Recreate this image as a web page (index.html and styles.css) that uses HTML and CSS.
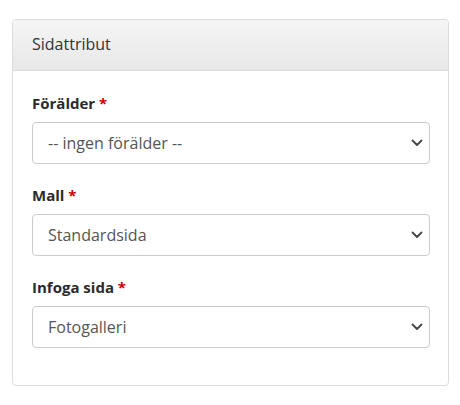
FILE: index.html
```html
<!DOCTYPE html>
<html lang="sv">
<head>
<meta charset="utf-8">
<title>Sidattribut</title>
<link rel="stylesheet" href="styles.css">
</head>
<body>
<div class="card">
  <div class="card-header">Sidattribut</div>
  <div class="card-body">
    <div class="form-group">
      <label class="label">Förälder <span class="req">*</span></label>
      <div class="select-wrap">
        <select class="select"><option>-- ingen förälder --</option></select>
        <svg class="chevron" width="12" height="8" viewBox="0 0 12 8"><path d="M1.5 1.5 L6 6 L10.5 1.5" fill="none" stroke="#444" stroke-width="1.8" stroke-linecap="round" stroke-linejoin="round"/></svg>
      </div>
    </div>
    <div class="form-group">
      <label class="label">Mall <span class="req">*</span></label>
      <div class="select-wrap">
        <select class="select"><option>Standardsida</option></select>
        <svg class="chevron" width="12" height="8" viewBox="0 0 12 8"><path d="M1.5 1.5 L6 6 L10.5 1.5" fill="none" stroke="#444" stroke-width="1.8" stroke-linecap="round" stroke-linejoin="round"/></svg>
      </div>
    </div>
    <div class="form-group">
      <label class="label">Infoga sida <span class="req">*</span></label>
      <div class="select-wrap">
        <select class="select"><option>Fotogalleri</option></select>
        <svg class="chevron" width="12" height="8" viewBox="0 0 12 8"><path d="M1.5 1.5 L6 6 L10.5 1.5" fill="none" stroke="#444" stroke-width="1.8" stroke-linecap="round" stroke-linejoin="round"/></svg>
      </div>
    </div>
  </div>
</div>
</body>
</html>
```
FILE: styles.css
```css
html, body {
  margin: 0;
  padding: 0;
  background: #fff;
}
body {
  font-family: "Open Sans", "Liberation Sans", sans-serif;
  color: #333;
  padding: 19px 0 0 12px;
}
.card {
  width: 437px;
  box-sizing: border-box;
  border: 1px solid #dcdcdc;
  border-radius: 4px;
  background: #fff;
  overflow: hidden;
}
.card-header {
  height: 51px;
  box-sizing: border-box;
  border-bottom: 1px solid #dddddd;
  background: linear-gradient(to bottom, #f5f5f5, #e8e8e8);
  padding: 0 19px;
  display: flex;
  align-items: center;
  font-size: 16px;
  color: #333;
  padding-bottom: 2px;
}
.card-body {
  padding: 22px 18px 16px 19px;
}
.form-group {
  margin-bottom: 21px;
}
.label {
  display: block;
  font-size: 15px;
  font-weight: 700;
  line-height: 20px;
  margin-bottom: 9px;
  color: #2b2b2b;
}
.req {
  color: #c00;
}
.select-wrap {
  position: relative;
}
.select {
  display: block;
  width: 100%;
  height: 42px;
  box-sizing: border-box;
  -webkit-appearance: none;
  appearance: none;
  border: 1px solid #cccccc;
  border-radius: 4px;
  background: #fff;
  padding: 0 30px 0 15px;
  font-family: "Open Sans", "Liberation Sans", sans-serif;
  font-size: 16px;
  color: #555;
  outline: none;
}
.chevron {
  position: absolute;
  right: 7px;
  top: 17px;
  pointer-events: none;
}
```
